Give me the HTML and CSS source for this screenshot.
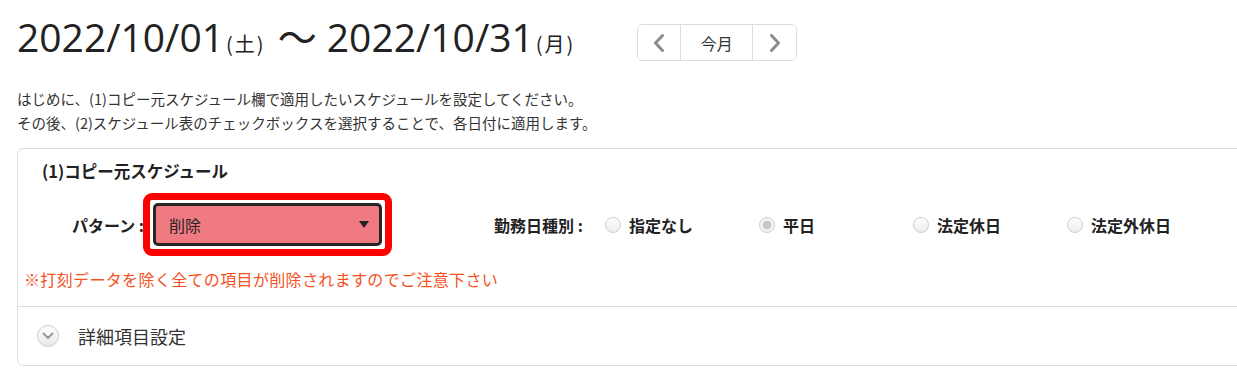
FILE: index.html
```html
<!DOCTYPE html>
<html lang="ja">
<head>
    <meta charset="UTF-8">
    <title>スケジュール一括適用</title>
    <link rel="stylesheet" href="styles.css">
</head>
<body>
    <div class="page">
        <div class="period-head">
            <h1 class="period">2022/10/01<small>(土)</small> 〜 2022/10/31<small>(月)</small></h1>
            <div class="month-nav">
                <button class="nav-btn prev" type="button">
                    <svg width="12" height="18" viewBox="0 0 12 18"><polyline points="9.5,1.5 2.5,9 9.5,16.5" fill="none" stroke="#8c8c8c" stroke-width="3" stroke-linecap="round" stroke-linejoin="round"/></svg>
                </button>
                <button class="nav-btn today" type="button">今月</button>
                <button class="nav-btn next" type="button">
                    <svg width="12" height="18" viewBox="0 0 12 18"><polyline points="2.5,1.5 9.5,9 2.5,16.5" fill="none" stroke="#8c8c8c" stroke-width="3" stroke-linecap="round" stroke-linejoin="round"/></svg>
                </button>
            </div>
        </div>

        <p class="guide">はじめに、(1)コピー元スケジュール欄で適用したいスケジュールを設定してください。<br>その後、(2)スケジュール表のチェックボックスを選択することで、各日付に適用します。</p>

        <div class="panel">
            <div class="panel-body">
                <h2 class="panel-title">(1)コピー元スケジュール</h2>
                <div class="form-row">
                    <div class="field">
                        <span class="field-label pattern-label">パターン :</span>
                        <div class="highlight">
                            <div class="select">削除<span class="caret"></span></div>
                        </div>
                    </div>
                    <div class="field daytype">
                        <span class="field-label daytype-label">勤務日種別 :</span>
                        <div class="radios">
                            <label class="radio"><span class="radio-mark"></span>指定なし</label>
                            <label class="radio"><span class="radio-mark checked"></span>平日</label>
                            <label class="radio"><span class="radio-mark"></span>法定休日</label>
                            <label class="radio"><span class="radio-mark"></span>法定外休日</label>
                        </div>
                    </div>
                </div>
                <p class="notice">※打刻データを除く全ての項目が削除されますのでご注意下さい</p>
            </div>
            <div class="panel-foot">
                <span class="toggle">
                    <svg width="12" height="8" viewBox="0 0 12 8"><polyline points="1.5,1.5 6,6 10.5,1.5" fill="none" stroke="#9a9a9a" stroke-width="2" stroke-linecap="round" stroke-linejoin="round"/></svg>
                </span>
                詳細項目設定
            </div>
        </div>
    </div>
</body>
</html>
```

FILE: styles.css
```css
html, body { overflow: hidden; }
body { margin: 0; font-family: "Noto Sans CJK JP", sans-serif; color: #333; background: #fff; }
.page { padding: 14px 0 0 17px; }

.period-head { display: flex; align-items: flex-start; }
.period { margin: 0; font: 400 39px/46px "Open Sans", "Noto Sans CJK JP", sans-serif; color: #222; white-space: nowrap; }
.period small { font: 400 20px "Noto Sans CJK JP", sans-serif; margin: 0 2px; letter-spacing: 2px; }

.month-nav { display: flex; margin: 10px 0 0 60px; height: 37px; border: 1px solid #ddd; border-radius: 5px; box-sizing: border-box; overflow: hidden; }
.nav-btn { display: flex; align-items: center; justify-content: center; padding: 0; border: 0; border-left: 1px solid #ddd; background: #fff; box-sizing: border-box; font: 400 16px "Noto Sans CJK JP", sans-serif; color: #333; }
.nav-btn.prev { width: 42px; border-left: 0; }
.nav-btn.today { width: 72px; }
.nav-btn.next { width: 44px; }

.guide { margin: 26px 0 0; font-size: 14.5px; line-height: 24px; color: #333; }

.panel { margin-top: 13px; width: 1250px; border: 1px solid #ddd; border-radius: 6px; }
.panel-body { padding: 10px 6px 15px; }
.panel-title { margin: 0 0 0 18px; font-size: 16.5px; line-height: 24px; font-weight: 700; color: #222; }

.form-row { display: flex; align-items: center; margin: 10px 0 0 48px; }
.field { display: flex; align-items: center; }
.field-label { font-size: 16px; font-weight: 700; color: #222; white-space: nowrap; }
.pattern-label { width: 71px; }
.daytype { margin-left: 102px; }
.daytype-label { width: 111px; }

.highlight { padding: 3px; border: 7px solid #f00; border-radius: 9px; background: #fff; }
.select { display: flex; align-items: center; justify-content: space-between; width: 229px; height: 43px; box-sizing: border-box; padding: 0 10px 0 13px; border: 3px solid #262626; border-radius: 5px; background: #f07a82; font-size: 16px; color: #222; }
.caret { width: 0; height: 0; border-left: 5px solid transparent; border-right: 5px solid transparent; border-top: 7px solid #222; }

.radios { display: flex; }
.radio { display: flex; align-items: center; width: 154px; font-size: 16px; font-weight: 700; color: #222; }
.radio-mark { width: 16px; height: 16px; margin-right: 8px; box-sizing: border-box; border: 1px solid #cfcfcf; border-radius: 50%; background: linear-gradient(#fff, #ececec); }
.radio-mark.checked { background: radial-gradient(circle, #c6c6c6 0 4px, #f3f3f3 4.6px); }

.notice { margin: 11px 0 0; font-size: 16px; line-height: 24px; letter-spacing: 0.35px; color: #f4511e; }

.panel-foot { display: flex; align-items: center; gap: 19px; height: 58px; padding-left: 19px; border-top: 1px solid #ddd; font-size: 18px; color: #333; }
.toggle { display: flex; align-items: center; justify-content: center; width: 22px; height: 22px; box-sizing: border-box; border: 1px solid #ccc; border-radius: 50%; background: linear-gradient(#fff, #e9e9e9); }
```
